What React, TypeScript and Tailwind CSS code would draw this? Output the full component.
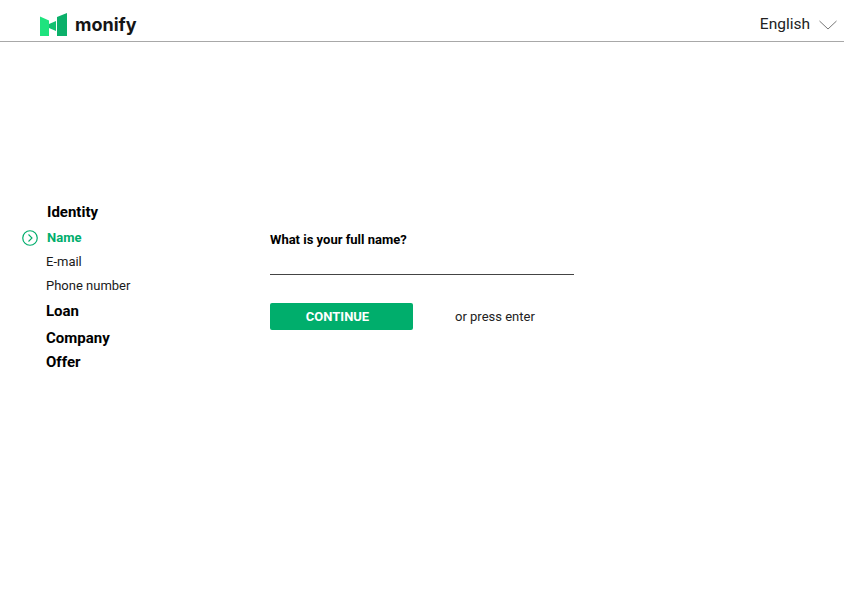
const font = "font-['Roboto',sans-serif]";

function Logo() {
  return (
    <svg width="28" height="24" viewBox="0 0 28 24" className="block">
      <path d="M0 3.5 L9 7.5 V23 H0 Z" fill="#1ee37e" />
      <path d="M9 11 L16 8 V18 L9 15 Z" fill="#12c070" />
      <path d="M17 4 L27 0 V23 H17 Z" fill="#0bb06a" />
    </svg>
  );
}

function Steps() {
  return (
    <div className="w-[270px] pt-[161px] shrink-0">
      <div className="pl-[47px] h-[18px] text-[15px] leading-[18px] font-bold text-black">Identity</div>
      <div className="flex items-center h-[18px] mt-[8px] pl-[22px]">
        <svg width="16" height="16" viewBox="0 0 16 16" className="shrink-0">
          <circle cx="8" cy="8" r="7.25" fill="none" stroke="#00ae6c" strokeWidth="1.2" />
          <path d="M6.5 4.5 L10 8 L6.5 11.5" fill="none" stroke="#00ae6c" strokeWidth="1.1" />
        </svg>
        <span className="ml-[9px] text-[13px] font-bold text-[#00ae6c]">Name</span>
      </div>
      <div className="pl-[46px] mt-[6px] h-[18px] text-[13px] leading-[18px] text-[#1a1a1a]">E-mail</div>
      <div className="pl-[46px] mt-[6px] h-[18px] text-[13px] leading-[18px] text-[#1a1a1a]">Phone number</div>
      <div className="pl-[46px] mt-[7px] h-[18px] text-[15px] leading-[18px] font-bold text-black">Loan</div>
      <div className="pl-[46px] mt-[9px] h-[18px] text-[15px] leading-[18px] font-bold text-black">Company</div>
      <div className="pl-[46px] mt-[6px] h-[18px] text-[15px] leading-[18px] font-bold text-black">Offer</div>
    </div>
  );
}

export default function App() {
  return (
    <div className={`${font} w-[844px] h-[600px] bg-white overflow-hidden`}>
      <header className="h-[42px] flex items-center justify-between border-b border-[#a8a8a8] pl-[40px] pr-[7px] pt-[8px]">
        <div className="flex items-center gap-[7px]">
          <Logo />
          <span className="font-['Inter',sans-serif] text-[18px] font-bold text-[#151515]">monify</span>
        </div>
        <div className="flex items-center gap-[9px] text-[15.5px] text-[#222]">
          English
          <svg width="18" height="10" viewBox="0 0 18 10" className="block">
            <path d="M0.5 1 L9 9 L17.5 1" fill="none" stroke="#666" strokeWidth="0.9" />
          </svg>
        </div>
      </header>
      <div className="flex">
        <Steps />
        <main className="pt-[190px] w-[304px]">
          <div className="text-[13px] leading-[16px] font-bold text-black">What is your full name?</div>
          <div className="mt-[10px] h-[17px] border-b border-[#444]" />
          <div className="flex items-center mt-[28px]">
            <button className="w-[143px] h-[27px] rounded-[2px] bg-[#00ae6c] text-white text-[13px] font-bold pr-[8px]">
              CONTINUE
            </button>
            <span className="ml-[42px] text-[13px] text-[#222]">or press enter</span>
          </div>
        </main>
      </div>
    </div>
  );
}
